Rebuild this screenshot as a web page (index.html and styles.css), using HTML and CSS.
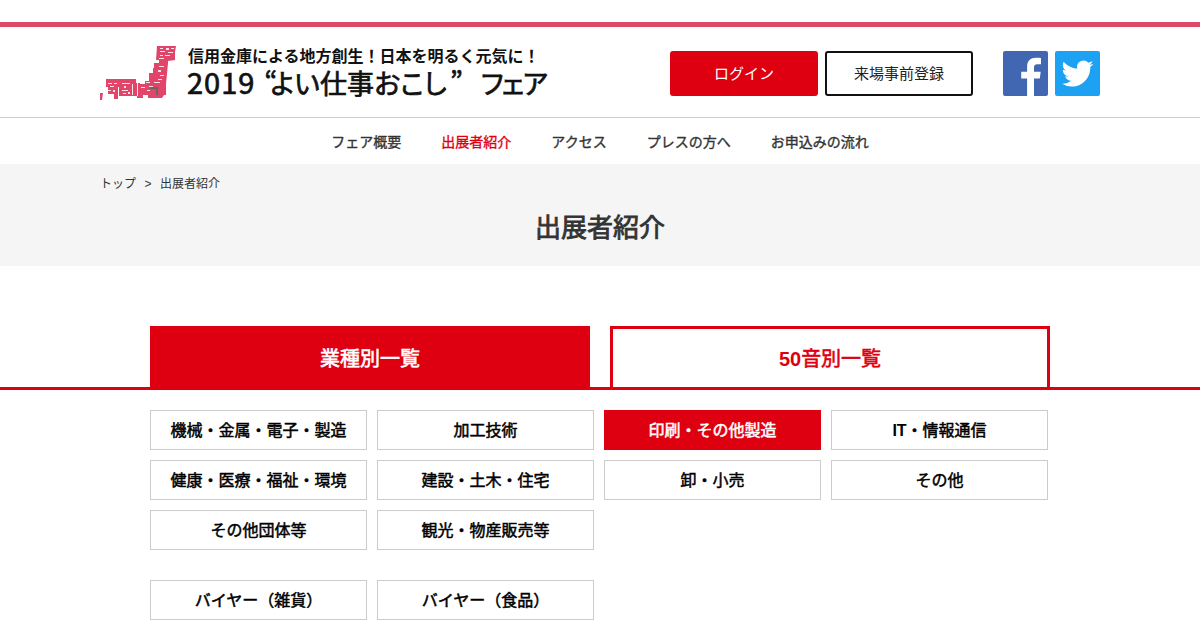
FILE: index.html
```html
<!DOCTYPE html>
<html lang="ja">
<head>
<meta charset="utf-8">
<title>出展者紹介</title>
<link rel="stylesheet" href="styles.css">
</head>
<body>
<header class="site-header">
  <div class="header-inner">
    <a class="brand">
      <svg class="brand-map" width="78" height="58" viewBox="0 0 78 58">
        <g fill="#e2456a">
          <path d="M57 1h19l-1 6v8l-7 1v2h-9v-3h-3z"/>
          <path d="M54 18h14l-1 11-1 10v11h-2l-2 3h-14v-3h-5v3h-6v-3h-3v-6l3-5h8v-3h4v-8h4v-5h1z"/>
          <path d="M19 34h17v4h4v13h-21z"/>
          <path d="M6 34h13v8h-1v12h-4v-5h-6v-7h-2z"/>
          <path d="M0 48h3l-1 7h-2z"/>
        </g>
        <g fill="#fbe3e8">
          <path d="M60 3h3v1h-3zM66 3h3v2h-3zM71 3h3v1h-3zM60 6h5v1h-5zM68 7h5v1h-5zM60 10h3v1h-3zM65 10h5v1h-5zM59 13h5v1h-5z"/>
          <path d="M59 21h5v1h-5zM58 25h3v2h-3zM60 30h4v1h-4zM58 34h4v1h-4zM54 37h6v1h-6zM46 37h4v1h-4zM49 41h4v1h-4zM41 42h4v1h-4zM47 45h3v1h-3z"/>
          <path d="M37 37v14h1V37zM33 39h-1v11h1zM22 38h8v1h-8zM24 41h2v2h-2zM22 45h6v1h-6zM23 48h3v1h-3zM28 47h2v2h-2z"/>
          <path d="M8 38h4v1H8zM14 38h3v1h-3zM10 41h4v1h-4zM8 45h3v1H8zM13 45h2v2h-2z"/>
        </g>
        <path d="M50 42h8v8h-2v-6h-6z" fill="#666"/>
      </svg>
      <span class="brand-text">
        <span class="brand-sub">信用金庫による地方創生！日本を明るく元気に！</span>
        <span class="brand-main"><span class="brand-year">2019</span><span class="brand-title"><span class="open-quote">“</span>よい仕事おこし<span class="close-quote">”</span></span><span class="brand-fair">フェア</span></span>
      </span>
    </a>
    <div class="header-actions">
      <a class="btn btn-login">ログイン</a>
      <a class="btn btn-register">来場事前登録</a>
      <div class="social">
        <a class="social-icon fb">
          <svg width="45" height="45" viewBox="0 0 45 45"><path fill="#fff" d="M31 45V27.6h5.8l.9-6.8H31v-4.3c0-2 .6-3.300 3.400-3.300H38V7.100c-.6-.1-2.800-.3-5.200-.3-5.200 0-8.700 3.100-8.700 8.900v5.100h-5.900v6.800h5.900V45z"/></svg>
        </a>
        <a class="social-icon tw">
          <svg width="45" height="45" viewBox="0 0 24 24"><path transform="translate(3.500 3.500) scale(.71)" fill="#fff" d="M23.950 4.570a10 10 0 0 1-2.820.78 4.960 4.960 0 0 0 2.160-2.720c-.95.550-2 .96-3.130 1.190a4.920 4.920 0 0 0-8.380 4.480C7.690 8.100 4.070 6.130 1.640 3.160a4.820 4.820 0 0 0-.66 2.470c0 1.710.87 3.210 2.190 4.100a4.900 4.900 0 0 1-2.230-.61v.06a4.920 4.920 0 0 0 3.950 4.830 4.990 4.990 0 0 1-2.210.08 4.940 4.940 0 0 0 4.600 3.420A9.870 9.870 0 0 1 0 19.540a13.940 13.940 0 0 0 7.550 2.210c9.050 0 14-7.500 14-13.980 0-.21 0-.42-.02-.63a9.940 9.940 0 0 0 2.460-2.550z"/></svg>
        </a>
      </div>
    </div>
  </div>
</header>
<nav class="global-nav">
  <a>フェア概要</a>
  <a class="current">出展者紹介</a>
  <a>アクセス</a>
  <a>プレスの方へ</a>
  <a>お申込みの流れ</a>
</nav>
<section class="page-head">
  <div class="crumbs"><span>トップ</span><span>&gt;</span><span>出展者紹介</span></div>
  <h1>出展者紹介</h1>
</section>
<main>
  <div class="tabs">
    <a class="tab tab-active">業種別一覧</a>
    <a class="tab"><span><b class="latin">50</b>音別一覧</span></a>
  </div>
  <div class="cat-grid">
    <a class="cat">機械・金属・電子・製造</a>
    <a class="cat">加工技術</a>
    <a class="cat cat-active">印刷・その他製造</a>
    <a class="cat"><span><b class="latin">IT</b>・情報通信</span></a>
    <a class="cat">健康・医療・福祉・環境</a>
    <a class="cat">建設・土木・住宅</a>
    <a class="cat">卸・小売</a>
    <a class="cat">その他</a>
    <a class="cat">その他団体等</a>
    <a class="cat">観光・物産販売等</a>
  </div>
  <div class="cat-grid buyer">
    <a class="cat">バイヤー（雑貨）</a>
    <a class="cat">バイヤー（食品）</a>
  </div>
</main>
</body>
</html>
```
FILE: styles.css
```css
* { box-sizing: border-box; }
html, body { margin: 0; height: 630px; overflow: hidden; }
body {
  background: #fff;
  color: #333;
  font-family: "Liberation Sans", "Noto Sans CJK JP", sans-serif;
  padding-top: 22px;
}
.site-header {
  height: 96px;
  border-top: 5px solid #dd4a68;
  border-bottom: 1px solid #ccc;
}
.header-inner {
  width: 1000px;
  margin: 0 auto;
  height: 90px;
  display: flex;
  justify-content: space-between;
  align-items: flex-start;
}
.brand { display: flex; align-items: flex-start; padding-top: 18px; }
.brand-map { display: block; flex: none; margin-right: 9px; filter: blur(.3px); }
.brand-text { display: flex; flex-direction: column; color: #111; font-family: "Noto Sans CJK JP", sans-serif; }
.brand-sub { font-size: 16px; font-weight: 700; line-height: 20px; margin-left: 1px; white-space: nowrap; }
.brand-main {
  display: flex;
  align-items: baseline;
  line-height: 34px;
  margin-top: -1px;
  white-space: nowrap;
  font-feature-settings: "palt";
  -webkit-text-stroke: .7px currentColor;
}
.brand-year { font-size: 29px; letter-spacing: 1px; margin-right: 9px; }
.brand-title { font-size: 27px; letter-spacing: .2px; }
.open-quote { margin-right: -7px; }
.close-quote { margin-left: 3px; }
.brand-fair { font-size: 27px; letter-spacing: -1.5px; margin-left: 18px; }
.header-actions { display: flex; padding-top: 24px; }
.btn {
  width: 148px;
  height: 45px;
  margin-right: 7px;
  border-radius: 3px;
  display: flex;
  align-items: center;
  justify-content: center;
  font-size: 15px;
  padding-bottom: 2px;
}
.btn-login { background: #de0011; color: #fff; }
.btn-register { background: #fff; color: #222; border: 2px solid #111; }
.social { display: flex; gap: 7px; margin-left: 23px; }
.social-icon { width: 45px; height: 45px; border-radius: 2px; overflow: hidden; display: block; }
.social-icon svg { display: block; }
.fb { background: #4267b2; }
.tw { background: #1da1f2; }
.global-nav {
  height: 46px;
  display: flex;
  justify-content: center;
  align-items: center;
  gap: 40px;
  font-size: 14px;
  -webkit-text-stroke: .35px currentColor;
}
.current { color: #de0011; }
.page-head { height: 102px; background: #f5f5f5; }
.crumbs {
  width: 1000px;
  margin: 0 auto;
  padding-top: 12px;
  display: flex;
  gap: 8.5px;
  font-size: 12px;
  line-height: 16px;
}
.page-head h1 {
  margin: 17px 0 0;
  text-align: center;
  font-size: 26px;
  line-height: 38px;
  font-weight: 400;
  -webkit-text-stroke: .8px currentColor;
}
.tabs {
  margin-top: 60px;
  height: 64px;
  border-bottom: 3px solid #de0011;
  display: flex;
  justify-content: center;
  gap: 20px;
}
.tab {
  width: 440px;
  height: 64px;
  border: 3px solid #de0011;
  color: #de0011;
  background: #fff;
  display: flex;
  align-items: center;
  justify-content: center;
  font-size: 20px;
  font-weight: 400;
  -webkit-text-stroke: .6px currentColor;
  padding-bottom: 1px;
}
.tab-active { background: #de0011; color: #fff; }
.cat-grid {
  width: 900px;
  margin: 20px auto 0;
  display: grid;
  grid-template-columns: repeat(4, 217px);
  grid-auto-rows: 40px;
  gap: 10px;
}
.buyer { margin-top: 30px; }
.cat {
  border: 1px solid #ccc;
  display: flex;
  align-items: center;
  justify-content: center;
  color: #000;
  font-size: 16px;
  font-weight: 400;
  -webkit-text-stroke: .5px currentColor;
  padding-bottom: 2px;
}
.cat-active { background: #de0011; border-color: #de0011; color: #fff; }
.latin { font-weight: 700; -webkit-text-stroke: 0; }
```
